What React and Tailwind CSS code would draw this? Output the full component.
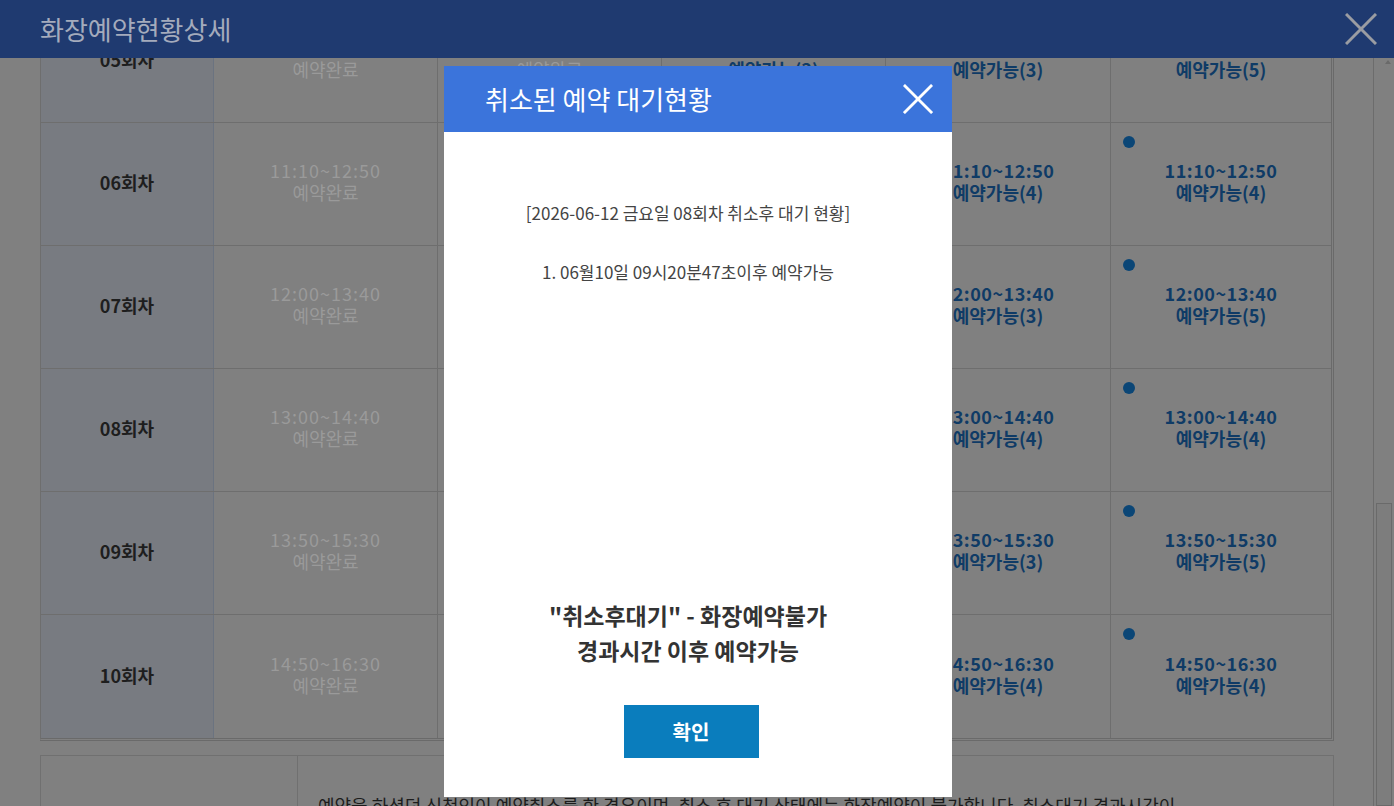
import React from 'react';

const rows = [
  { no: '05', time: '10:20~12:00', c4: 3, c5: 3, c6: 5 },
  { no: '06', time: '11:10~12:50', c4: 4, c5: 4, c6: 4 },
  { no: '07', time: '12:00~13:40', c4: 3, c5: 3, c6: 5 },
  { no: '08', time: '13:00~14:40', c4: 4, c5: 4, c6: 4 },
  { no: '09', time: '13:50~15:30', c4: 3, c5: 3, c6: 5 },
  { no: '10', time: '14:50~16:30', c4: 4, c5: 4, c6: 4 },
];

const CloseIcon = ({ className }) => (
  <svg viewBox="0 0 32 32" className={className} fill="none" stroke="currentColor" strokeWidth="3">
    <line x1="1" y1="1" x2="31" y2="31" />
    <line x1="31" y1="1" x2="1" y2="31" />
  </svg>
);

const DoneCell = ({ time }) => (
  <div className="flex flex-col items-center justify-center border-r border-[#6e6e6e] pb-[6px] text-[#9a9a9a]">
    <span className="text-[18px] leading-[22px] tracking-[1px]">{time}</span>
    <span className="text-[18px] leading-[22px]">예약완료</span>
  </div>
);

const OpenCell = ({ time, count, last }) => (
  <div
    className={`relative flex flex-col items-center justify-center pb-[6px] text-[#0f3b66] font-semibold ${
      last ? '' : 'border-r border-[#6e6e6e]'
    }`}
  >
    <span className="absolute left-[12px] top-[13px] h-[12px] w-[12px] rounded-full bg-[#0b4676]" />
    <span className="text-[18px] leading-[22px] tracking-[0.5px]">{time}</span>
    <span className="text-[18px] leading-[22px]">예약가능({count})</span>
  </div>
);

const WaitModal = () => (
  <div className="absolute left-[444px] top-[66px] flex h-[731px] w-[508px] flex-col bg-white">
    <div className="flex h-[66px] items-center justify-between bg-[#3b74db] pl-[41px] pr-[19px]">
      <h2 className="text-[26px] leading-[30px] text-white">취소된 예약 대기현황</h2>
      <CloseIcon className="h-[30px] w-[30px] text-white" />
    </div>
    <div className="flex flex-1 flex-col items-center pr-[20px] pt-[70px] pb-[39px]">
      <p className="text-[17px] leading-[22px] text-[#444]">[2026-06-12 금요일 08회차 취소후 대기 현황]</p>
      <p className="mt-[37px] text-[17px] leading-[22px] text-[#444]">1. 06월10일 09시20분47초이후 예약가능</p>
      <div className="mt-auto text-center text-[23px] font-semibold leading-[35px] text-[#333]">
        <p>"취소후대기" - 화장예약불가</p>
        <p>경과시간 이후 예약가능</p>
      </div>
      <button className="ml-[6px] mt-[37px] h-[53px] w-[135px] bg-[#0a7dbd] text-[20px] font-bold text-white">
        확인
      </button>
    </div>
  </div>
);

export default function App() {
  return (
    <div className="relative h-[806px] w-[1394px] overflow-hidden bg-[#808080] font-['Noto_Sans_CJK_KR','Noto_Sans',sans-serif]">
      <div className="flex h-full">
        <main className="flex-1 pl-[40px] pr-[39px]">
          <div className="-mt-px border-b-[3px] border-l border-r-[3px] border-t border-double border-[#6a6a6a] border-l-[#6e6e6e]">
            {rows.map((r, i) => (
              <div
                key={r.no}
                className={`grid h-[123px] grid-cols-[173px_224px_224px_224px_225px_1fr] ${
                  i < rows.length - 1 ? 'border-b border-[#6e6e6e]' : ''
                }`}
              >
                <div className="flex items-center justify-center border-r border-[#6b7380] bg-[#787b81] pb-[3px] text-[18px] font-semibold text-[#1e1e1e]">
                  {r.no}회차
                </div>
                <DoneCell time={r.time} />
                <DoneCell time={r.time} />
                <OpenCell time={r.time} count={r.c4} />
                <OpenCell time={r.time} count={r.c5} />
                <OpenCell time={r.time} count={r.c6} last />
              </div>
            ))}
          </div>
          <div className="mt-[14px] grid h-[100px] grid-cols-[257px_1fr] border border-[#707070]">
            <div className="border-r border-[#707070]" />
            <p className="whitespace-nowrap pl-[20px] pt-[38px] text-[18px] leading-[22px] text-[#1c1c1c]">
              예약을 하셨던 신청인이 예약취소를 한 경우이며, 취소 후 대기 상태에는 화장예약이 불가합니다. 취소대기 경과시간이
            </p>
          </div>
        </main>
        <div className="relative w-[21px] border-l border-[#6c6c6c]">
          <div className="absolute right-[3px] top-[60px] h-0 w-0 border-x-[3px] border-b-[4px] border-x-transparent border-b-[#6a6a6a]" />
          <div className="absolute left-[2px] right-[2px] top-[503px] bottom-0 border border-[#6a6a6a] bg-[#7d7d7d]" />
        </div>
      </div>

      <header className="absolute left-0 right-0 top-0 flex h-[58px] items-center justify-between bg-[#1f3a70] pl-[40px] pr-[17px]">
        <h1 className="text-[26px] leading-[30px] text-[#a4abbc]">화장예약현황상세</h1>
        <CloseIcon className="h-[32px] w-[32px] text-[#9a9ca2]" />
      </header>

      <WaitModal />
    </div>
  );
}
